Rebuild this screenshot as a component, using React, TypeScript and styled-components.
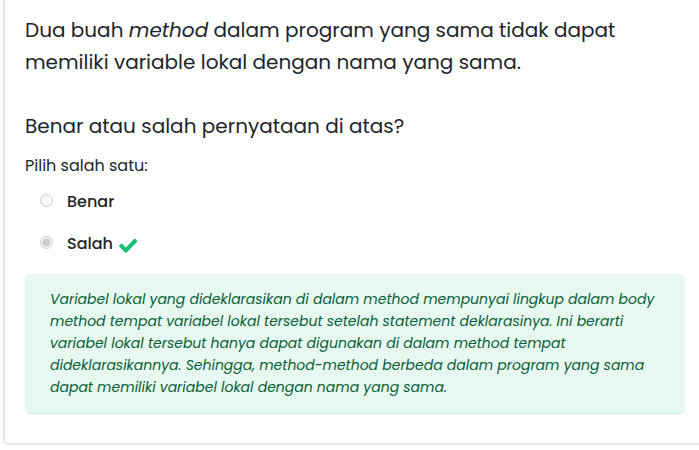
import React from "react";
import styled, { createGlobalStyle } from "styled-components";

const GlobalStyle = createGlobalStyle`
  *, *::before, *::after { box-sizing: border-box; }
  body {
    margin: 0;
    background: #fff;
    color: #212529;
    font-family: Poppins, Inter, "Open Sans", sans-serif;
    font-size: 16px;
    line-height: 24px;
  }
`;

const Page = styled.main`
  padding-left: 3px;
  overflow: hidden;
`;

const Card = styled.form`
  padding: 14px 14px 29px 20px;
  border: solid #e7e7e7;
  border-width: 0 0 2px 2px;
  border-bottom-left-radius: 5px;
`;

const Question = styled.div`
  font-size: 20px;
  line-height: 32px;
`;

const Paragraph = styled.p`
  margin: 0 0 32px;
  &:last-child { margin-bottom: 0; }
`;

const Options = styled.fieldset`
  margin: 12px 0 0;
  padding: 0;
  border: 0;
`;

const Prompt = styled.legend`
  margin-bottom: 3px;
  padding: 0;
`;

const Option = styled.div`
  display: flex;
  align-items: center;
  height: 42px;
  padding-left: 15px;
`;

const Radio = styled.input`
  appearance: none;
  width: 13px;
  height: 13px;
  margin: 0 14px 4px 0;
  border: 1px solid #cfcfcf;
  border-radius: 50%;
  background: #f8f8f8;
  &:checked {
    background: radial-gradient(circle, #cbcbcb 0 3px, #f8f8f8 5px);
  }
`;

const OptionLabel = styled.label`
  font-weight: 500;
`;

const Check = styled.svg`
  width: 20px;
  height: 16px;
  margin: 1px 0 0 5px;
  fill: #12bf73;
`;

const Feedback = styled.section`
  margin-top: 9px;
  padding: 14px 25px 15px;
  border-bottom: 1px solid #d0f0e1;
  border-radius: 5px;
  background: #e7f8f0;
  color: #085f38;
  font-size: 14px;
  font-style: italic;
  line-height: 22px;
`;

const choices = [
  { id: "benar", text: "Benar", selected: false },
  { id: "salah", text: "Salah", selected: true },
];

export default function App() {
  return (
    <Page>
      <GlobalStyle />
      <Card>
        <Question>
          <Paragraph>
            Dua buah <em>method</em> dalam program yang sama tidak dapat memiliki
            variable lokal dengan nama yang sama.
          </Paragraph>
          <Paragraph>Benar atau salah pernyataan di atas?</Paragraph>
        </Question>
        <Options>
          <Prompt>Pilih salah satu:</Prompt>
          {choices.map((choice) => (
            <Option key={choice.id}>
              <Radio
                type="radio"
                name="answer"
                id={choice.id}
                defaultChecked={choice.selected}
                disabled
              />
              <OptionLabel htmlFor={choice.id}>{choice.text}</OptionLabel>
              {choice.selected && (
                <Check viewBox="0 0 20 16" aria-hidden="true">
                  <path d="M1.400 8.400 2.900 6.900q.7-.7 1.400 0l3.500 3.500L16.100 2.100q.7-.7 1.400 0l1.500 1.500q.7.7 0 1.400L8.500 15.400q-.7.7-1.400 0L1.400 9.800q-.7-.7 0-1.400Z" />
                </Check>
              )}
            </Option>
          ))}
        </Options>
        <Feedback>
          Variabel lokal yang dideklarasikan di dalam method mempunyai lingkup
          dalam body method tempat variabel lokal tersebut setelah statement
          deklarasinya. Ini berarti variabel lokal tersebut hanya dapat digunakan
          di dalam method tempat dideklarasikannya. Sehingga, method-method
          berbeda dalam program yang sama dapat memiliki variabel lokal dengan
          nama yang sama.
        </Feedback>
      </Card>
    </Page>
  );
}
